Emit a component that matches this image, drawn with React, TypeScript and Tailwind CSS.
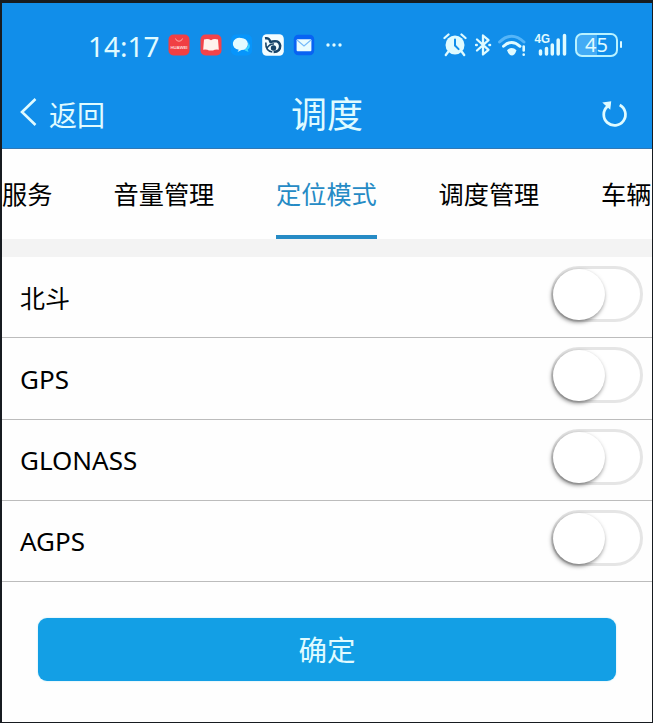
import React from "react";

const ink = "#e0fbff";

function AppIcons() {
  return (
    <div className="flex items-center gap-[9.500px]">
      <svg width="22" height="22" viewBox="0 0 22 22">
        <rect x="0.5" y="0.5" width="21" height="21" rx="5" fill="#f13f43" />
        <path d="M7.5 4.5a3.6 3.6 0 0 0 7 0" fill="none" stroke="#ffaaa5" strokeWidth="1" />
        <text x="11" y="14.6" textAnchor="middle" fontSize="4.4" fontWeight="700" fill="#ffdcd8" fontFamily="Liberation Sans, sans-serif" textLength="17">HUAWEI</text>
      </svg>
      <svg width="22" height="22" viewBox="0 0 22 22">
        <rect x="0.5" y="0.5" width="21" height="21" rx="5" fill="#f34349" />
        <path d="M4 5.5q4-1.5 7 .8 3-2.3 7-.8l.8 10.2q-4-.4-5.800.8h-4q-1.800-1.200-5.800-.8z" fill="#fff3ee" />
      </svg>
      <svg width="21" height="22" viewBox="0 0 21 22">
        <rect x="0" y="0.5" width="21" height="21" rx="5" fill="#0795fb" />
        <path d="M13 15.500a6 5.500 0 0 0 4-7.500q4 5-.3 7.500l.8 2.500-3-1.300z" fill="#38d5ff" />
        <path d="M10 4a6.600 6 0 1 0-2.200 11.800l-1.300 2.300 4-2A6.600 6 0 0 0 10 4z" fill="#e4fbff" />
      </svg>
      <svg width="22" height="22" viewBox="0 0 22 22">
        <rect x="0.200" y="0.200" width="21.600" height="21.600" rx="4.500" fill="#f4fdff" />
        <path d="M3 4.300q4.800-.8 5.300 4" fill="none" stroke="#184469" strokeWidth="2.400" />
        <path d="M7.500 8.300q9.700-3.500 10.700 3.500 0 6-6.600 6.200" fill="none" stroke="#184469" strokeWidth="2.500" />
        <path d="M3.800 8.500q-.3 8.500 6.500 9.500M5 14q3-4.500 7-4" fill="none" stroke="#184469" strokeWidth="1.600" />
        <circle cx="11.500" cy="14" r="2.700" fill="#184469" />
      </svg>
      <svg width="22" height="22" viewBox="0 0 22 22">
        <rect x="0.800" y="0.800" width="20.400" height="20.400" rx="4.500" fill="#0863f3" />
        <rect x="3.600" y="5.300" width="14.800" height="12" rx="1" fill="#e9fcff" />
        <path d="M4 6l7 6 7-6" fill="none" stroke="#76baf9" strokeWidth="1.200" />
      </svg>
      <svg width="18" height="6" viewBox="0 0 18 6" fill={ink}>
        <circle cx="3" cy="3" r="1.700" />
        <circle cx="9" cy="3" r="1.700" />
        <circle cx="15" cy="3" r="1.700" />
      </svg>
    </div>
  );
}

function SystemIcons() {
  return (
    <div className="flex items-center">
      <svg width="24" height="24" viewBox="0 0 24 24">
        <circle cx="12" cy="12" r="9.500" fill={ink} />
        <path d="M1.500 5l4-3.500M22.500 5l-4-3.500M5 19l-2.200 3M19 19l2.200 3" stroke={ink} strokeWidth="2.300" strokeLinecap="round" />
        <path d="M12 6.500v6l3.600 3.600" fill="none" stroke="#118eea" strokeWidth="2" strokeLinecap="round" />
      </svg>
      <svg width="18" height="24" viewBox="0 0 18 24" className="ml-[7px]">
        <path d="M3 6.500l11.500 10.300L9 21.500v-19l5.500 4.700L3 17.500" fill="none" stroke={ink} strokeWidth="2.300" strokeLinejoin="round" strokeLinecap="round" />
        <path d="M2.200 12h.500M15.500 12h.500" stroke={ink} strokeWidth="2.600" strokeLinecap="round" />
      </svg>
      <svg width="28" height="24" viewBox="0 0 28 24" className="ml-[6px]" fill="none">
        <path d="M1.500 9q12-11.500 24.500 0" stroke="#55b5f8" strokeWidth="2.900" strokeLinecap="round" />
        <path d="M5.500 13.300q8-7.600 16.500 0" stroke={ink} strokeWidth="2.900" strokeLinecap="round" />
        <path d="M9 17.300q4.800-4.500 9.500 0-1.700 5.200-4.700 5.200T9 17.300z" fill={ink} />
        <path d="M25.700 13.500v4M25.700 21.500v.2" stroke={ink} strokeWidth="2.600" strokeLinecap="round" />
      </svg>
      <svg width="34" height="28" viewBox="0 -4 34 28" className="-mt-[4px] ml-[8px] overflow-visible">
        <text x="0.500" y="9.500" fontSize="12.500" fontWeight="700" fill={ink} fontFamily="Liberation Sans, sans-serif" textLength="15.500" lengthAdjust="spacingAndGlyphs">4G</text>
        <path d="M6.500 18v3M12.500 15.500v5.500M18.300 12v9M24.200 7v14M30.500 2.500v18.500" stroke={ink} strokeWidth="3.500" strokeLinecap="round" />
      </svg>
      <div className="ml-[7px] flex h-[24px] w-[43px] items-center justify-center rounded-[7px] border-2 border-[#b9f2ff] bg-[linear-gradient(90deg,#43abf5_50%,#118eea_50%)] pt-px font-['Noto_Sans',sans-serif] text-[20px] leading-none text-[#e0fbff]">
        45
      </div>
      <div className="ml-[2px] h-[7px] w-[2px] rounded bg-[#e0fbff]" />
    </div>
  );
}

function Toggle() {
  return (
    <div className="mr-[9px] mb-[6px] h-[56px] w-[92px] rounded-full border-[3px] border-[#e5e5e5] bg-white">
      <div className="-ml-[1px] h-[51px] w-[52px] rounded-full bg-white shadow-[-1px_2px_4px_rgba(0,0,0,0.5)]" />
    </div>
  );
}

const modes = ["北斗", "GPS", "GLONASS", "AGPS"];

export default function App() {
  return (
    <div className="flex h-[723px] w-[653px] flex-col overflow-hidden border-t-[3px] border-r border-b border-l-2 border-[#171b20] bg-[#fefefe] font-['Noto_Sans','Noto_Sans_CJK_SC',sans-serif]">
      <header className="flex h-[146px] shrink-0 flex-col border-b border-[#3178b5] bg-[#118eea] text-[#e0fbff]">
        <div className="flex h-[74px] items-center justify-between pt-[9px] pr-[30px] pl-[86px]">
          <div className="flex items-center">
            <span className="mt-[2px] w-[80px] text-[28px] leading-none">14:17</span>
            <AppIcons />
          </div>
          <SystemIcons />
        </div>
        <div className="grid h-[71px] grid-cols-3 items-center px-[17px]">
          <div className="flex items-center">
            <svg width="18" height="30" viewBox="0 0 18 30" fill="none" stroke={ink} strokeWidth="2.600" className="-mt-[3px]">
              <path d="M16.500 3L3 16l13.500 13" />
            </svg>
            <span className="mt-[4px] ml-[12px] text-[28px] leading-none">返回</span>
          </div>
          <h1 className="mt-[4px] text-center text-[36px] leading-none font-normal">调度</h1>
          <svg className="mr-[3px] justify-self-end" width="34" height="34" viewBox="0 0 36 36">
            <path d="M23 9.500A11.500 11.500 0 1 1 10 11" fill="none" stroke={ink} strokeWidth="2.900" />
            <path d="M4.500 7l9.500-1.500-1 9z" fill={ink} />
          </svg>
        </div>
      </header>
      <nav className="flex h-[90px] shrink-0 gap-[61.500px] overflow-hidden text-[25.200px] leading-none whitespace-nowrap text-black">
        <div className="w-[50px] shrink-0 pt-[33px]">服务</div>
        <div className="w-[101px] shrink-0 pt-[33px]">音量管理</div>
        <div className="w-[101px] shrink-0 border-b-4 border-[#268bc5] pt-[33px] text-[#268bc5]">定位模式</div>
        <div className="w-[101px] shrink-0 pt-[33px]">调度管理</div>
        <div className="w-[101px] shrink-0 pt-[33px]">车辆</div>
      </nav>
      <div className="h-[18px] shrink-0 bg-[#f3f3f3]" />
      <main>
        {modes.map((mode) => (
          <div key={mode} className="flex h-[81.250px] items-center justify-between border-b border-[#bcbcbc] pl-[18px]">
            <span className={mode === "北斗" ? "mt-[2px] text-[25px] leading-none text-black" : "mt-[1px] text-[26px] leading-none text-black"}>{mode}</span>
            <Toggle />
          </div>
        ))}
      </main>
      <button className="mt-[36px] mr-[36px] ml-[36px] h-[63px] shrink-0 rounded-[9px] bg-[#139fe5] pt-[2px] text-[28.500px] leading-none text-[#e0fbff] shadow-[0_0_2px_#b8e8f5]">
        确定
      </button>
    </div>
  );
}
